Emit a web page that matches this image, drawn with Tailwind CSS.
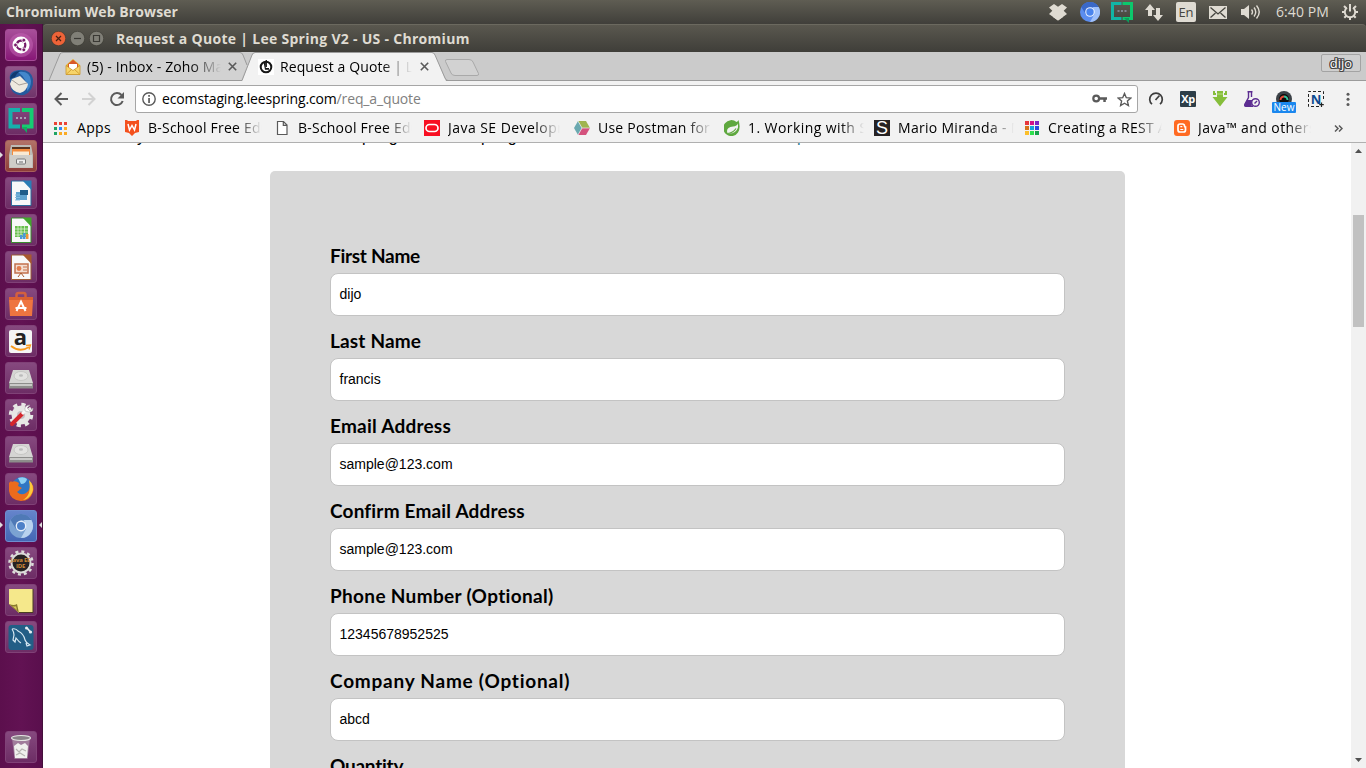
<!DOCTYPE html>
<html lang="en">
<head>
<meta charset="utf-8">
<title>Request a Quote | Lee Spring V2 - US</title>
<script src="https://cdn.jsdelivr.net/npm/@tailwindcss/browser@4"></script>
</head>
<body class="w-[1366px] h-[768px] overflow-hidden flex flex-col bg-[#3c3b37] font-['Open_Sans','Noto_Sans',sans-serif] text-[14px] text-black">

<!-- system panel -->
<header class="h-6 shrink-0 flex items-center bg-linear-to-b from-[#5f5d53] to-[#403f3a] text-[#dfdbd2] pl-[6px] pr-[8px]">
  <span class="font-bold tracking-[0.1px] whitespace-pre mr-auto leading-6">Chromium Web Browser</span>
  <svg class="w-[18px] h-[18px] mr-[13px]" viewBox="0 0 18 18" fill="#dfdbd2"><path d="M5 1 9 3.800 13 1 18 4.500 14.700 7.800 18 11 9 17.500 0 11 3.300 7.800 0 4.500Z"/><path d="M4 12v2l5 3.500 5-3.500v-2l-5 3Z"/></svg>
  <svg class="w-5 h-5 mr-[11px]" viewBox="0 0 20 20"><circle cx="10" cy="10" r="10" fill="#5b8def"/><path d="M1.300 5A10 10 0 0 1 18.700 5H10L6 12.500Z" fill="#3a68c8"/><path d="M18.700 5A10 10 0 0 1 10 20l4.300-7.500L13 5Z" fill="#9fc0fb"/><circle cx="10" cy="10" r="4.800" fill="#e8f0ff"/><circle cx="10" cy="10" r="3.700" fill="#4a84ee"/></svg>
  <svg class="w-[22px] h-[22px] mr-[12px]" viewBox="0 0 22 22" fill="none" stroke-width="3"><path d="M10.500 2.500H1.500v15H10.500" stroke="#12b5a6"/><path d="M11.500 2.500h9v15h-9" stroke="#0cc86c"/><path d="M13 17h5v5Z" fill="#0a9c5c"/><path d="M6.500 10h9" stroke="#8d96a8" stroke-width="1.500" stroke-dasharray="2 1.500"/></svg>
  <svg class="w-[18px] h-[18px] mr-[13px]" viewBox="0 0 18 18" fill="#dfdbd2"><path d="M5 1 10 7H7v6H3V7H0Z"/><path d="M13 18 8 12h3V5h4v7h3Z"/></svg>
  <span class="w-5 h-5 rounded-[2px] bg-[#dfdbd2] text-[#45443e] text-[13px] leading-[20px] text-center mr-[13px] font-medium">En</span>
  <svg class="w-[18px] h-[13px] mr-[14px]" viewBox="0 0 18 13"><rect width="18" height="13" fill="#dfdbd2"/><path d="M1.500 1.500 9 8l7.500-6.500M1.500 11.500 6.500 7M16.500 11.500l-5-4.500" fill="none" stroke="#45443e" stroke-width="1.300"/></svg>
  <svg class="w-[20px] h-[16px] mr-[15px]" viewBox="0 0 20 16"><path d="M0 5h3l5-4v14l-5-4H0Z" fill="#dfdbd2"/><path d="M10.500 5.500q2 2.500 0 5M13 3.500q3.500 4.500 0 9M15.500 1.500q5.500 6.500 0 13" fill="none" stroke="#dfdbd2" stroke-width="1.400"/></svg>
  <span class="tracking-[0.090px] mr-[12px] w-[54px] whitespace-pre leading-6">6:40 PM</span>
  <svg class="w-4 h-4" viewBox="0 0 16 16" fill="none" stroke="#dfdbd2"><path d="M5 3.800a5.200 5.200 0 1 0 6 0" stroke-width="1.900"/><path d="M8 0v7.500" stroke-width="2"/><path d="M0 8h2.500M13.500 8H16M2 2l2.300 2.300M14 2l-2.300 2.300M2.300 13.700l2-2M13.700 13.700l-2-2M8 13v3" stroke-width="2"/></svg>
</header>

<div class="flex flex-1 min-h-0">
  <!-- launcher -->
  <nav class="relative w-[43px] shrink-0 bg-linear-to-r from-[#5c0f4d] via-[#621253] to-[#5a0f4d] pt-[5px] flex flex-col items-center gap-[5px] border-r border-[#45103b] pr-px">
    <div class="size-8 rounded-[3px] border border-[#a54b96] bg-linear-to-b from-[#a84e9a] to-[#871677] flex items-center justify-center"><svg class="size-[26px]" viewBox="0 0 26 26"><circle cx="13" cy="13" r="12" fill="#c565b5" opacity=".5"/><circle cx="13" cy="13" r="8.500" fill="#fff"/><circle cx="13" cy="13" r="4.300" fill="none" stroke="#761a69" stroke-width="2.200" stroke-dasharray="7.500 1.500" stroke-dashoffset="3"/><g fill="#761a69" stroke="#fff" stroke-width=".8"><circle cx="7.500" cy="13" r="1.900"/><circle cx="15.800" cy="8.200" r="1.900"/><circle cx="15.800" cy="17.800" r="1.900"/></g></svg></div>
    <div class="size-8 rounded-[3px] border border-[#8b4b80] bg-linear-to-b from-[#92588a] to-[#70346a] flex items-center justify-center"><svg class="size-[28px]" viewBox="0 0 28 28"><path d="M3 12Q1 3 12 2Q24 1 26 11Q27 23 17 27Q7 28 4 21Z" fill="#245a9e"/><path d="M11 4q12-2 13 9 0 6-4 10 1-12-9-19Z" fill="#4387cc"/><path d="M5 11 13 8l8 8q-1 7-8 9Q5 24 3 16Z" fill="#eee9df"/><path d="m5 12 7 5 8-2" fill="none" stroke="#a69f99"/><path d="M3 11Q4 3 13 3q-4 3-5 6Z" fill="#123a70"/></svg></div>
    <div class="size-8 rounded-[3px] border border-[#804177] bg-linear-to-b from-[#86497f] to-[#6d2d65] flex items-center justify-center"><svg class="size-[28px]" viewBox="0 0 28 28" fill="none" stroke-width="4"><path d="M13 5H3.500v16.500H13" stroke="#16b0ac"/><path d="M15 5h9.500v16.500H15" stroke="#15cc72"/><path d="M15 22h5v6Z" fill="#0fb060"/><path d="M9 13h10" stroke="#a5a2b6" stroke-width="2" stroke-dasharray="2 2"/></svg></div>
    <div class="size-8 rounded-[3px] border border-[#a8605c] bg-linear-to-b from-[#b27268] to-[#8d3d38] flex items-center justify-center"><svg class="size-[28px]" viewBox="0 0 28 28"><path d="M4 3h20l2 10v13H2V13Z" fill="#bdbbb6"/><path d="M5 5h18v7H5Z" fill="#5b3420"/><path d="M5 7h18v6H5Z" fill="#f28b3c"/><path d="M6 9.500h16V13H6Z" fill="#f9e9d2"/><path d="M3 13h22v12.500H3Z" fill="#cfcdc8"/><rect x="9.500" y="17" width="9" height="5" rx="1" fill="#eee" stroke="#777"/><path d="M12 20h4" stroke="#666"/></svg></div>
    <div class="size-8 rounded-[3px] border border-[#804177] bg-linear-to-b from-[#86497f] to-[#6d2d65] flex items-center justify-center"><svg class="size-[28px]" viewBox="0 0 28 28"><path d="M4.500 2h13l6.500 7v17.500H4.500Z" fill="#f8f8f8" stroke="#2b6a9c"/><path d="M15.500 1.500h9V11Z" fill="#2b7db5"/><rect x="9" y="13" width="11" height="8" fill="#5fa3cf"/><path d="M13 11h8v5h-8Z" fill="#1e5d8a"/><path d="M8 16h5M8 18.500h5M8 21h5" stroke="#84bce0"/></svg></div>
    <div class="size-8 rounded-[3px] border border-[#804177] bg-linear-to-b from-[#86497f] to-[#6d2d65] flex items-center justify-center"><svg class="size-[28px]" viewBox="0 0 28 28"><path d="M4.500 2h13l6.500 7v17.500H4.500Z" fill="#f8f8f8" stroke="#3a8c2e"/><path d="M15.500 1.500h9V11Z" fill="#43a62d"/><rect x="8" y="10" width="13" height="11" fill="#67bf4c"/><path d="M8 13h13M8 16h13M8 19h13M11 10v11M14 10v11M17.500 10v11" stroke="#e6f5df" stroke-width=".7"/><path d="M13 23v-4h2.500v4M16 23v-6h2.500v6" fill="#4c98d6"/><path d="M19 23v-5h2.500v5Z" fill="#ef9436"/></svg></div>
    <div class="size-8 rounded-[3px] border border-[#804177] bg-linear-to-b from-[#86497f] to-[#6d2d65] flex items-center justify-center"><svg class="size-[28px]" viewBox="0 0 28 28"><path d="M4.500 2h13l6.500 7v17.500H4.500Z" fill="#f8f8f8" stroke="#9c5a35"/><path d="M15.500 1.500h9V11Z" fill="#a8592d"/><rect x="8" y="11" width="13" height="9" fill="#f3ddd0" stroke="#c2704c" stroke-width="1.500"/><circle cx="12" cy="15.500" r="2.400" fill="#e27c4d"/><path d="M16 14h4M16 17h4" stroke="#c2704c"/><path d="m11 24 3-4 3 4" fill="none" stroke="#a8592d"/></svg></div>
    <div class="size-8 rounded-[3px] border border-[#804177] bg-linear-to-b from-[#86497f] to-[#6d2d65] flex items-center justify-center"><svg class="size-[28px]" viewBox="0 0 28 28"><path d="M9.500 8V5q0-2 2-2h5q2 0 2 2v3" fill="none" stroke="#d3603e" stroke-width="2.500"/><path d="M2 7h24v3l-1 16H3L2 10Z" fill="#ee7540"/><path d="M2 7h24v3H2Z" fill="#d95f32"/><path d="M9.500 21 14 11.500 18.500 21M8.500 18h11" fill="none" stroke="#fff" stroke-width="2"/></svg></div>
    <div class="size-8 rounded-[3px] border border-[#804177] bg-linear-to-b from-[#86497f] to-[#6d2d65] flex items-center justify-center"><div class="relative w-[23px] h-[23px] rounded-[2px] bg-[#f5f5f5] flex justify-center font-bold text-[22px] leading-[13px] text-[#222]">a<svg class="absolute left-0 top-[14px] w-[23px] h-[8px]" viewBox="0 0 23 8"><path d="M2 2q9 7 18 1" fill="none" stroke="#f79a1e" stroke-width="1.800"/><path d="M17 1.500 21.500 1 20 5.500" fill="none" stroke="#f79a1e" stroke-width="1.300"/></svg></div></div>
    <div class="size-8 rounded-[3px] border border-[#804177] bg-linear-to-b from-[#86497f] to-[#6d2d65] flex items-center justify-center"><svg class="size-[28px]" viewBox="0 0 28 28"><path d="M6 6h16l4 13v5H2v-5Z" fill="#d5d5d3"/><path d="M2 19h24v5.500H2Z" fill="#8d8d8b"/><path d="M3 20h22v2H3Z" fill="#c9c9c7"/><ellipse cx="14" cy="12" rx="7" ry="4.500" fill="#e2e2e0" stroke="#c0c0be" stroke-width=".8"/><ellipse cx="14" cy="11.500" rx="2" ry="1.200" fill="#bbb"/></svg></div>
    <div class="size-8 rounded-[3px] border border-[#804177] bg-linear-to-b from-[#86497f] to-[#6d2d65] flex items-center justify-center"><svg class="size-[28px]" viewBox="0 0 28 28"><circle cx="14" cy="14" r="9.500" fill="#e7e7e5"/><circle cx="14" cy="14" r="10.500" fill="none" stroke="#e7e7e5" stroke-width="3.500" stroke-dasharray="4.200 4.050"/><circle cx="14" cy="14" r="4" fill="#c4bfc4"/><path d="M5 23 15 13" stroke="#d4262c" stroke-width="4" stroke-linecap="round"/><path d="M15 13 20 8" stroke="#f7f7f7" stroke-width="3"/><path d="M18 10q-1-6 5-6l-3 3 3 3 3-3q0 6-8 3" fill="#fafafa" stroke="#aaa" stroke-width=".6"/></svg></div>
    <div class="size-8 rounded-[3px] border border-[#804177] bg-linear-to-b from-[#86497f] to-[#6d2d65] flex items-center justify-center"><svg class="size-[28px]" viewBox="0 0 28 28"><path d="M6 6h16l4 13v5H2v-5Z" fill="#d5d5d3"/><path d="M2 19h24v5.500H2Z" fill="#8d8d8b"/><path d="M3 20h22v2H3Z" fill="#c9c9c7"/><ellipse cx="14" cy="12" rx="7" ry="4.500" fill="#e2e2e0" stroke="#c0c0be" stroke-width=".8"/><ellipse cx="14" cy="11.500" rx="2" ry="1.200" fill="#bbb"/></svg></div>
    <div class="size-8 rounded-[3px] border border-[#804177] bg-linear-to-b from-[#86497f] to-[#6d2d65] flex items-center justify-center"><svg class="size-[28px]" viewBox="0 0 28 28"><circle cx="15" cy="12.500" r="10.500" fill="#2f76c4"/><path d="M11 3q6-2 9 1-1 5-6 5Z" fill="#8fd0f2"/><path d="M2 8q2-3 3-1 3-2 7 1l-1 3 4 2-5 4q4 4 9 1 6-4 3-12 6 4 4 11-3 9-12 9Q3 25 2 16Z" fill="#ec6b1d"/><path d="M22 5q6 6 3 13-3 6-9 7 9-5 6-20Z" fill="#fbc93c"/></svg></div>
    <div class="relative size-8 rounded-[3px] border border-[#6f8dcf] bg-linear-to-b from-[#6584cb] to-[#4467b4] flex items-center justify-center"><svg class="size-[28px]" viewBox="0 0 28 28"><circle cx="14" cy="14" r="12" fill="#7ba2d2"/><path d="M3.600 8A12 12 0 0 1 24.400 8H14L9 17Z" fill="#4f79b6"/><path d="M24.400 8A12 12 0 0 1 14 26l5-9-2-9Z" fill="#b9d2ee"/><circle cx="14" cy="14" r="5.400" fill="#e7effa"/><circle cx="14" cy="14" r="4" fill="#4d80c8"/></svg></div>
    <div class="relative size-8 rounded-[3px] border border-[#804177] bg-linear-to-b from-[#86497f] to-[#6d2d65] flex items-center justify-center"><svg class="absolute size-[28px]" viewBox="0 0 28 28"><circle cx="14" cy="14" r="9.500" fill="#262223" stroke="#dcdcda" stroke-width="2"/><circle cx="14" cy="14" r="11.500" fill="none" stroke="#dcdcda" stroke-width="2.500" stroke-dasharray="3 3.020"/></svg><div class="relative text-[6px] leading-[6px] font-bold text-center text-[#cf8b3a] whitespace-nowrap tracking-[-0.2px]">Java EE<br>IDE</div></div>
    <div class="size-8 rounded-[3px] border border-[#804177] bg-linear-to-b from-[#86497f] to-[#6d2d65] flex items-center justify-center"><svg class="size-[28px]" viewBox="0 0 28 28"><path d="M2 3h24v24H12L2 18Z" fill="#f5e88b"/><path d="M2 18q5 2 8 0l2 9Z" fill="#8a7a2c"/><path d="M5 20q3 1 4 0l1 4Z" fill="#d9c95e"/><path d="M12 26.500h14V3" fill="none" stroke="#4b3d22"/></svg></div>
    <div class="size-8 rounded-[3px] border border-[#804177] bg-linear-to-b from-[#86497f] to-[#6d2d65] flex items-center justify-center"><svg class="size-[28px]" viewBox="0 0 28 28"><rect x="1.500" y="2" width="25" height="25" rx="3" fill="#225e86"/><path d="M5 6q4-1 6 2 6 3 7 9 1 3 5 5l-3 1-1-3M5 6q2 3 2 6l-1 5 2 2 1-4q3 4 5 5" fill="none" stroke="#d8e9f3" stroke-width="1.200"/><path d="m20 5 3 3.500" stroke="#e6eef3" stroke-width="1.800"/><circle cx="23.500" cy="9" r="1.600" fill="#e6eef3"/><circle cx="19.500" cy="5" r="1.500" fill="#e6eef3"/></svg></div>
    <div class="mt-auto mb-[5px] size-8 rounded-[3px] border border-[#804177] bg-linear-to-b from-[#86497f] to-[#6d2d65] flex items-center justify-center"><svg class="size-[28px]" viewBox="0 0 28 28"><path d="M5 5h18l-2.500 21h-13Z" fill="#b9a6b6" opacity=".6"/><path d="m7 13 4-3 3 2 4-2 3 3-1 12H8Z" fill="#f0f0ee"/><path d="m9 16 3 3 3-3 4 2M9 22l4-2 5 3" fill="none" stroke="#b6b4b2" stroke-width="1.200"/><ellipse cx="14" cy="5" rx="9.500" ry="2.500" fill="#8b8289" stroke="#e5e5e3" stroke-width="1.200"/></svg></div>
    <svg class="absolute left-0 top-[128px] w-[3px] h-[6px]" viewBox="0 0 3 6"><path d="M0 0l3 3-3 3Z" fill="#ddd"/></svg>
    <svg class="absolute left-0 top-[498px] w-[3px] h-[6px]" viewBox="0 0 3 6"><path d="M0 0l3 3-3 3Z" fill="#ddd"/></svg>
    <svg class="absolute right-0 top-[498px] w-[3px] h-[6px]" viewBox="0 0 3 6"><path d="M3 0 0 3l3 3Z" fill="#ddd"/></svg>
  </nav>

  <!-- browser window -->
  <div class="flex-1 min-w-0 flex flex-col">
    <div class="h-7 shrink-0 flex items-center bg-linear-to-b from-[#5a584f] to-[#3f3e39] rounded-t-[4px] border-t border-[#6b695f] pl-[8px] gap-[4px]">
      <svg class="w-[15px] h-[15px]" viewBox="0 0 15 15"><circle cx="7.500" cy="7.500" r="7.200" fill="#ee6338" stroke="#38352f" stroke-width=".6"/><path d="m5 5 5 5M10 5l-5 5" stroke="#4a2113" stroke-width="1.200"/></svg>
      <svg class="w-[15px] h-[15px]" viewBox="0 0 15 15"><circle cx="7.500" cy="7.500" r="7.200" fill="#807f77" stroke="#38352f" stroke-width=".6"/><path d="M4 7.500h7" stroke="#3a3934" stroke-width="1.200"/></svg>
      <svg class="w-[15px] h-[15px]" viewBox="0 0 15 15"><circle cx="7.500" cy="7.500" r="7.200" fill="#807f77" stroke="#38352f" stroke-width=".6"/><path d="M4.500 4.500h6v6h-6Z" fill="none" stroke="#3a3934" stroke-width="1.200"/></svg>
      <span class="ml-[8px] font-bold tracking-[0.290px] whitespace-pre text-[#dfdbd2]">Request a Quote | Lee Spring V2 - US - Chromium</span>
    </div>

    <!-- tab strip -->
    <div class="relative h-[29px] shrink-0 bg-[#cbcbcb]">
      <svg class="absolute inset-0 w-[1323px] h-[29px]" viewBox="0 0 1323 29" fill="none" stroke="#9b9b9b">
        <path d="M0 28.500H6L17 2Q18 .500 20 .500H197Q199 .500 200 3L204 13 198 28.500Z" fill="#d2d2d2" stroke="none"/>
        <path d="M0 28.500H6L17 2Q18 .500 20 .500H197Q199 .500 200 3L204 13"/>
        <path d="M0 28.500H199M403 28.500H1323"/>
        <path d="M199 29.500 209 3Q210 1 212 1H389Q391 1 392 3L403 29.500Z" fill="#f2f2f2" stroke="none"/>
        <path d="M199 28.500 209 3Q210 .500 212 .500H389Q391 .500 392 3L402 26Q403 28.500 405 28.500"/>
        <path d="M404 7.500H426Q429 7.500 430 10L435.500 21.500Q436 23.500 434 23.500H412Q409 23.500 408 21L402.500 9.500Q402 7.500 404 7.500Z" fill="#d2d2d2" stroke="#a9a9a9"/>
      </svg>
      <div class="relative h-full flex items-center pl-[22px]">
        <svg class="w-[16px] h-[16px] mr-[6px]" viewBox="0 0 16 16"><path d="M1 6 8 0l7 6v9.500H1Z" fill="#e5b430"/><path d="M3 5 8 .800 13 5v4H3Z" fill="#d8582b"/><path d="M4 5h8v4l-4 3-4-3Z" fill="#fff"/><path d="M1 6.500 8 11.500l7-5v9H1Z" fill="#f7d469" stroke="#c9942a" stroke-width=".8"/><path d="m1.500 15 5-4.500M14.500 15l-5-4.500" stroke="#c9942a" stroke-width=".8"/></svg>
        <span class="w-[134px] overflow-hidden whitespace-pre tracking-[0.110px] mask-r-from-[77%] mask-r-to-100%">(5) - Inbox - Zoho Mail</span>
        <svg class="w-[9px] h-[9px] ml-[7px] mr-[21px]" viewBox="0 0 9 9"><path d="m.800.800 7.400 7.400M8.200.800.800 8.200" stroke="#5a5a5a" stroke-width="1.600"/></svg>
        <svg class="w-[16px] h-[16px] mr-[6px]" viewBox="0 0 16 16"><rect width="16" height="16" fill="#fff"/><circle cx="8" cy="8" r="5.300" fill="none" stroke="#161616" stroke-width="2"/><path d="M5.500 3h2.300v6H11v1.700H7Z" fill="#161616"/><path d="M8.300 1v7" stroke="#161616" stroke-width="1.200"/></svg>
        <span class="w-[132px] overflow-hidden whitespace-pre tracking-[0.100px] mask-r-from-[77%] mask-r-to-100%">Request a Quote | Lee</span>
        <svg class="w-[9px] h-[9px] ml-[8px]" viewBox="0 0 9 9"><path d="m.800.800 7.400 7.400M8.200.800.800 8.200" stroke="#5a5a5a" stroke-width="1.600"/></svg>
        <span class="ml-auto mr-[5px] mb-[7px] w-[40px] h-[18px] rounded-[2px] border border-[#a3a3a3] bg-[#cfcfcf] flex items-center justify-center text-[13px] leading-[16px] text-white [text-shadow:1px_0_#444,-1px_0_#444,0_1px_#444,0_-1px_#444,1px_1px_#444,-1px_-1px_#444,1px_-1px_#444,-1px_1px_#444]">dijo</span>
      </div>
    </div>

    <!-- toolbar -->
    <div class="h-[36px] shrink-0 bg-[#f2f2f2] flex items-center pl-[11px]">
      <svg class="w-[14px] h-[14px] mr-[14px]" viewBox="0 0 14 14" fill="none" stroke="#5a5a5a" stroke-width="2"><path d="M14 7H1.500M7.500 1l-6 6 6 6"/></svg>
      <svg class="w-[14px] h-[14px] mr-[13px]" viewBox="0 0 14 14" fill="none" stroke="#d2d2d2" stroke-width="2"><path d="M0 7h12.500M6.500 1l6 6-6 6"/></svg>
      <svg class="w-[16px] h-[16px] mr-[10px]" viewBox="0 0 16 16"><path d="M13.700 10A6 6 0 1 1 12.500 4" fill="none" stroke="#5a5a5a" stroke-width="2"/><path d="M15 1v6.500H8.500Z" fill="#5a5a5a"/></svg>
      <div class="w-[1003px] h-[28px] rounded-[3px] border border-[#a6a6a6] bg-white flex items-center pl-[6px]">
        <svg class="w-[14px] h-[14px] mr-[6px]" viewBox="0 0 14 14"><circle cx="7" cy="7" r="6.200" fill="none" stroke="#5a5a5a" stroke-width="1.400"/><path d="M6.200 3h1.700v1.700H6.200ZM6.200 6h1.700v5H6.200Z" fill="#5a5a5a"/></svg>
        <span class="whitespace-pre tracking-[-0.140px] pb-px">ecomstaging.leespring.com<span class="text-[#808080]">/req_a_quote</span></span>
        <svg class="ml-auto w-[15px] h-[9px] mr-[10px] mb-px" viewBox="0 0 15 9"><circle cx="4.200" cy="4.500" r="2.900" fill="none" stroke="#5a5a5a" stroke-width="2.200"/><path d="M7 3.300h8v2.500h-1.200V8h-2.500V5.800H7Z" fill="#5a5a5a"/></svg>
        <svg class="w-[15px] h-[15px] mr-[5px]" viewBox="0 0 15 15"><path d="m7.500 1.500 1.800 4.200 4.500.4-3.400 3 1 4.400-3.900-2.300-3.900 2.300 1-4.400-3.400-3 4.500-.4Z" fill="none" stroke="#5a5a5a" stroke-width="1.400"/></svg>
      </div>
      <div class="flex items-center gap-[16px] pl-[10px]">
        <svg class="w-4 h-4" viewBox="0 0 16 16"><path d="M4 13.200A6.300 6.300 0 1 1 12 13.200" fill="none" stroke="#3c3c3c" stroke-width="1.700"/><path d="m7.500 9 4-4.500" stroke="#3c3c3c" stroke-width="1.700"/></svg>
        <span class="w-4 h-4 bg-[#2d3e48] rounded-[1px] text-white font-bold text-[11px] leading-[15px] text-center tracking-[-0.5px]">Xp</span>
        <svg class="w-4 h-4" viewBox="0 0 16 16" fill="#86be3b"><path d="M5 0h6v6h4.500L8 15.500.500 6H5Z"/><path d="M1 0h2v2h1v2H1ZM15 0h-2v2h-1v2h3Z"/><path d="M5 3h6" stroke="#b6dd7b"/></svg>
        <svg class="w-4 h-4" viewBox="0 0 16 16" fill="none" stroke="#5c2d91"><path d="M3.500.800h5M4.500 1v5.500L.800 13.500q-.5 1.700 1 1.700H9M7.500 1v5" stroke-width="1.400"/><path d="M3 9.500h5l-1 5.500H1.500L1 13Z" fill="#5c2d91"/><circle cx="11.500" cy="11.500" r="3.800" fill="#f2f2f2" stroke-width="1.400"/><path d="m10.500 12.500 2.500-2.500" stroke-width="1.400"/></svg>
        <div class="relative w-4 h-4"><svg class="w-4 h-4" viewBox="0 0 16 16"><circle cx="8" cy="8" r="8" fill="#3b4147"/><circle cx="8" cy="8" r="5" fill="#0d0d0d"/><path d="M4.500 9A3.500 3.500 0 0 1 8 5.500" fill="none" stroke="#e54a3a" stroke-width="2"/><path d="M8 5.500A3.500 3.500 0 0 1 11.500 9" fill="none" stroke="#38c5a0" stroke-width="2"/></svg><span class="absolute -left-[4px] top-[11px] w-6 h-[11px] bg-[#1b87ee] rounded-[1px] text-white text-[10px] leading-[11px] text-center">New</span></div>
        <div class="relative w-4 h-4 text-[#0b4a8f] font-bold text-[13px] leading-[16px] text-center"><svg class="absolute inset-0 w-4 h-4" viewBox="0 0 16 16" fill="none" stroke="#222"><path d="M.500 11V.500h15V10M.500 8v7.500H11" stroke-dasharray="3 2"/><path d="M13.500 11.500v4.500M11.300 13.700h4.500" stroke-width="1.200"/></svg><span class="relative">N</span></div>
        <svg class="w-4 h-4" viewBox="0 0 16 16" fill="#5a5a5a"><circle cx="8" cy="3.200" r="1.500"/><circle cx="8" cy="8.300" r="1.500"/><circle cx="8" cy="13.400" r="1.500"/></svg>
      </div>
    </div>

    <!-- bookmarks -->
    <div class="h-[26px] shrink-0 bg-[#f2f2f2] border-b border-[#b0b0b0] flex items-center pl-[11px] pb-[3px] whitespace-pre">
      <svg class="w-[13px] h-[13px] mr-[10px]" viewBox="0 0 13 13"><path d="M0 0h3v3H0ZM5 0h3v3H5ZM10 0h3v3h-3Z" fill="#ea4335"/><path d="M0 5h3v3H0ZM0 10h3v3H0Z" fill="#1fa463"/><path d="M5 5h3v3H5Z" fill="#2f86f6"/><path d="M10 5h3v3h-3ZM5 10h3v3H5ZM10 10h3v3h-3Z" fill="#fbab24"/></svg>
      <span class="w-[47px] tracking-[0.340px] leading-5">Apps</span>
      <div class="flex w-[150px] leading-5"><svg class="w-4 h-4 mr-2 mt-[2px]" viewBox="0 0 16 16"><path d="M1 0h2l1 1h8l1-1h2v12l-4 1-3 3-3-3-4-1Z" fill="#f4511e"/><path d="m4 4 1.500 6L8 5.500 10.500 10 12 4" fill="none" stroke="#fff" stroke-width="1.500"/></svg><span class="w-[114px] overflow-hidden tracking-[0.220px] mask-r-from-[77%] mask-r-to-100%">B-School Free Education</span></div>
      <div class="flex w-[150px] leading-5"><svg class="w-4 h-4 mr-2 mt-[2px]" viewBox="0 0 16 16"><path d="M3.500 1.500h6l3.500 3.500v9.500H3.500ZM9.300 1.500V5.300H13" fill="#fff" stroke="#5a5a5a" stroke-width="1.200"/></svg><span class="w-[114px] overflow-hidden tracking-[0.220px] mask-r-from-[77%] mask-r-to-100%">B-School Free Education</span></div>
      <div class="flex w-[150px] leading-5"><svg class="w-4 h-4 mr-2 mt-[2px]" viewBox="0 0 16 16"><rect width="16" height="16" fill="#f80f22"/><rect x="2" y="4.500" width="12" height="7" rx="3.500" fill="none" stroke="#fff" stroke-width="1.700"/></svg><span class="w-[112px] overflow-hidden tracking-[0.450px] mask-r-from-[77%] mask-r-to-100%">Java SE Development</span></div>
      <div class="flex w-[150px] leading-5"><svg class="w-4 h-4 mr-2 mt-[2px]" viewBox="0 0 16 16"><path d="M4 1h8l4 7H8Z" fill="#9fb44e"/><path d="M4 1 8 8 4 15 0 8Z" fill="#6ba9b0"/><path d="M8 8h8l-4 7H4Z" fill="#d4527d"/><path d="M8 8h8M8 8 4 1M8 8l-4 7" stroke="#eee" stroke-width=".7"/></svg><span class="w-[114px] overflow-hidden tracking-[0.220px] mask-r-from-[77%] mask-r-to-100%">Use Postman for API</span></div>
      <div class="flex w-[150px] leading-5"><svg class="w-4 h-4 mr-2 mt-[2px]" viewBox="0 0 16 16"><path d="M14.500 0Q17 8 14 12.500A8 8 0 1 1 12.500 2Q14 1.500 14.500 0Z" fill="#5fa83f"/><path d="M14 3.500Q13 6 9 6.500 3 7 3 11q0 1.500 1 2.500Q12 14 14 7.500Z" fill="#f2f2f2"/><path d="M3.500 13.500Q9 13 12 8.500" fill="none" stroke="#5fa83f" stroke-width="1.200"/></svg><span class="w-[116px] overflow-hidden tracking-[0.420px] mask-r-from-[80%] mask-r-to-100%">1. Working with Spring</span></div>
      <div class="flex w-[150px] leading-5"><span class="w-4 h-4 mr-2 mt-[2px] bg-[#262223] text-white text-[18px] leading-[16px] text-center font-['Liberation_Sans',sans-serif]">S</span><span class="w-[116px] overflow-hidden tracking-[0.290px] mask-r-from-[77%] mask-r-to-100%">Mario Miranda - Maps</span></div>
      <div class="flex w-[150px] leading-5"><svg class="w-4 h-4 mr-2 mt-[2px]" viewBox="0 0 16 16"><path d="M1 1h4v4H1Z" fill="#e8363c"/><path d="M6 1h4v4H6Z" fill="#d1118a"/><path d="M11 1h4v4h-4Z" fill="#7a22c4"/><path d="M1 6h4v4H1Z" fill="#d4731d"/><path d="M6 6h4v4H6Z" fill="#12a3dc"/><path d="M11 6h4v4h-4Z" fill="#2a49e0"/><path d="M1 11h4v4H1Z" fill="#fbbf2b"/><path d="M6 11h4v4H6Z" fill="#2ee04e"/><path d="M11 11h4v4h-4Z" fill="#17a34a"/></svg><span class="w-[114px] overflow-hidden tracking-[0.280px] mask-r-from-[77%] mask-r-to-100%">Creating a REST API</span></div>
      <div class="flex w-[160px] leading-5"><svg class="w-4 h-4 mr-2 mt-[2px]" viewBox="0 0 16 16"><rect width="16" height="16" rx="3" fill="#ff6a22"/><path d="M6 4h2.500a2 2 0 0 1 2 2q0 1 1 1v3a2 2 0 0 1-2 2H6a2 2 0 0 1-2-2V6a2 2 0 0 1 2-2Z" fill="none" stroke="#fff" stroke-width="1.700"/><path d="M6.300 6.600h2M6.300 9.500h3" stroke="#fff" stroke-width="1.200"/></svg><span class="w-[113px] overflow-hidden tracking-[0.410px] mask-r-from-[80%] mask-r-to-100%">Java™ and others</span></div>
      <svg class="w-[9px] h-[7px] mt-px" viewBox="0 0 9 7" fill="none" stroke="#5a5a5a" stroke-width="1.500"><path d="M1 .500l3 3-3 3M5 .500l3 3-3 3"/></svg>
    </div>

    <!-- page -->
    <div class="flex-1 min-h-0 flex bg-white">
      <main class="w-[1308px] overflow-hidden pl-[94px] font-['Liberation_Sans',Arial,sans-serif]">
        <div class="h-[28px] flex text-[16px] leading-[20px] whitespace-pre overflow-hidden"><span class="-mt-[16px] w-[217px]">y</span><span class="-mt-[16px] w-[119px]">spring</span><span class="-mt-[16px] w-[324px]">spring</span><span class="-mt-[16px] text-[#2a7d94]">p</span></div>
        <form class="ml-[133px] w-[855px] h-[700px] rounded-[5px] bg-[#d8d8d8] px-[60px] pt-[71px]">
          <label class="block h-[85px]"><span class="block h-[31px] font-bold text-[19px] leading-[27px] font-[Lato,sans-serif] tracking-[-0.280px]">First Name</span><span class="flex items-center w-[735px] h-[43px] rounded-[8px] border border-[#c3c3c3] bg-white pl-[8.500px]">dijo</span></label>
          <label class="block h-[85px]"><span class="block h-[31px] font-bold text-[19px] leading-[27px] font-[Lato,sans-serif] tracking-[0.170px]">Last Name</span><span class="flex items-center w-[735px] h-[43px] rounded-[8px] border border-[#c3c3c3] bg-white pl-[8.500px]">francis</span></label>
          <label class="block h-[85px]"><span class="block h-[31px] font-bold text-[19px] leading-[27px] font-[Lato,sans-serif] tracking-[0.230px]">Email Address</span><span class="flex items-center w-[735px] h-[43px] rounded-[8px] border border-[#c3c3c3] bg-white pl-[8.500px]">sample@123.com</span></label>
          <label class="block h-[85px]"><span class="block h-[31px] font-bold text-[19px] leading-[27px] font-[Lato,sans-serif] tracking-[0.180px]">Confirm Email Address</span><span class="flex items-center w-[735px] h-[43px] rounded-[8px] border border-[#c3c3c3] bg-white pl-[8.500px]">sample@123.com</span></label>
          <label class="block h-[85px]"><span class="block h-[31px] font-bold text-[19px] leading-[27px] font-[Lato,sans-serif] tracking-[0.330px]">Phone Number (Optional)</span><span class="flex items-center w-[735px] h-[43px] rounded-[8px] border border-[#c3c3c3] bg-white pl-[8.500px]">12345678952525</span></label>
          <label class="block h-[85px]"><span class="block h-[31px] font-bold text-[19px] leading-[27px] font-[Lato,sans-serif] tracking-[0.760px]">Company Name (Optional)</span><span class="flex items-center w-[735px] h-[43px] rounded-[8px] border border-[#c3c3c3] bg-white pl-[8.500px]">abcd</span></label>
          <label class="block h-[85px]"><span class="block h-[31px] font-bold text-[19px] leading-[27px] font-[Lato,sans-serif] tracking-[-0.250px]">Quantity</span></label>
        </form>
      </main>
      <div class="w-[15px] bg-[#f1f1f1] flex flex-col items-center py-[6px]">
        <svg class="w-[7px] h-[4px]" viewBox="0 0 7 4"><path d="M0 4 3.500 0 7 4Z" fill="#505050"/></svg>
        <div class="mt-[62px] w-[11px] h-[112px] bg-[#c1c1c1]"></div>
        <svg class="mt-auto w-[7px] h-[4px]" viewBox="0 0 7 4"><path d="M0 0l3.500 4L7 0Z" fill="#505050"/></svg>
      </div>
    </div>
  </div>
</div>
</body>
</html>
